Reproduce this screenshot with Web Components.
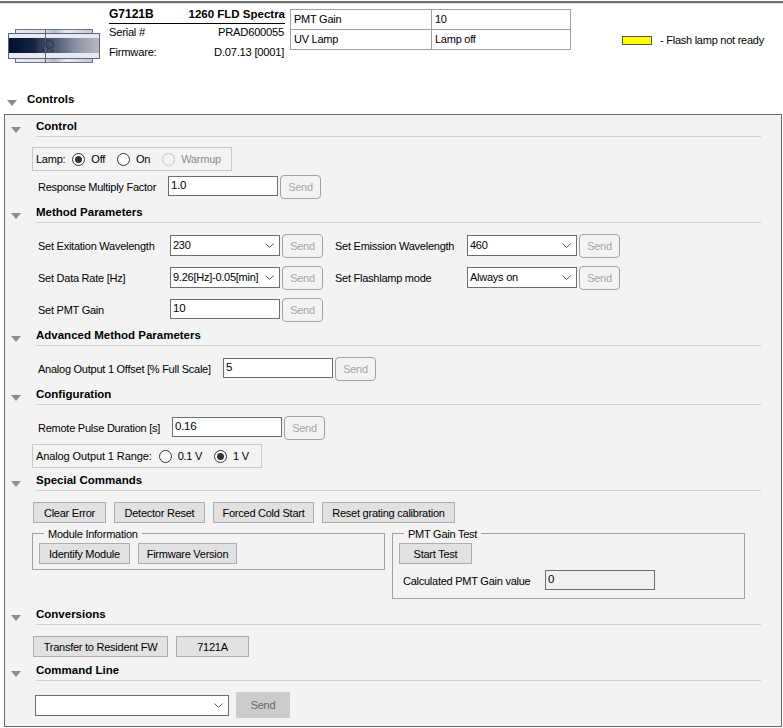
<!DOCTYPE html>
<html><head><meta charset="utf-8"><style>
html,body{margin:0;padding:0;background:#fff;}
body{font:11px "Liberation Sans",Arial,sans-serif;letter-spacing:-.25px;color:#000;width:783px;height:728px;overflow:hidden;}
</style></head><body>
<x-app></x-app>
<script>
function def(name, css, html){
  customElements.define(name, class extends HTMLElement{
    connectedCallback(){
      if(this.shadowRoot) return;
      const a=(k,d='')=>this.hasAttribute(k)?this.getAttribute(k):d;
      const r=this.attachShadow({mode:'open'});
      r.innerHTML='<style>'+css+'</style>'+(typeof html==='function'?html(a):html);
    }
  });
}
const CHEV='<svg width="9" height="5" viewBox="0 0 9 5"><path d="M.5 .5l4 4 4-4" fill="none" stroke="#555" stroke-width="1"/></svg>';

def('x-send',`:host{display:block;width:41px;height:24px;box-sizing:border-box;border:1px solid #a2a2a2;border-radius:4px;color:#a6a6a6;text-align:center;line-height:22px;flex:none}`,'Send');

def('x-input',`:host{display:block;width:110px;box-sizing:border-box;height:20px;border:1px solid #6e6e6e;background:#fff;padding:0 2px;line-height:16px;flex:none;margin-top:1px;font-size:11.5px}
:host([off]){background:#f0f0f0}`,a=>a('value'));

def('x-select',`:host{display:flex;align-items:center;width:110px;box-sizing:border-box;height:21px;border:1px solid #6e6e6e;background:#fff;padding:0 5px 0 2px;flex:none;margin-top:1px;white-space:nowrap}
span{flex:1;overflow:hidden;line-height:17px;margin-top:-1px;min-height:17px}svg{flex:none;margin-left:2px}`,a=>`<span>${a('value')}</span>${CHEV}`);

def('x-param',`:host{display:flex;align-items:flex-start;height:24px}
.l{flex:none;line-height:24px;white-space:nowrap}x-send{margin-left:2px}`,
a=>`<div class="l" style="width:${a('lw','132')}px">${a('label')}</div>`+
(a('kind')==='select'?`<x-select value="${a('value')}"></x-select>`:`<x-input value="${a('value')}"></x-input>`)+`<x-send></x-send>`);

def('x-radio',`:host{display:inline-flex;align-items:center;gap:6px;white-space:nowrap}
:host([dis]){color:#8c8c8c}
i{display:block;width:13px;height:13px;box-sizing:border-box;border:1px solid #333;border-radius:50%;background:#fff;position:relative;flex:none}
:host([dis]) i{border-color:#c4c4c4;background:#f3f3f3}
:host([on]) i::after{content:"";display:block;width:7px;height:7px;border-radius:50%;background:#333;margin:2px}`,
a=>`<i></i><slot></slot>`);

def('x-radiobox',`:host{display:flex;align-items:center;box-sizing:border-box;height:24px;border:1px solid #c9c9c9;padding:0 0 0 3px;gap:12px;white-space:nowrap}
::slotted(span){margin-right:-5px}`,`<slot></slot>`);

def('x-btn',`:host{display:block;box-sizing:border-box;height:21px;background:#e1e1e1;border:1px solid #adadad;text-align:center;line-height:20px;flex:none;white-space:nowrap}`,`<slot></slot>`);

def('x-group',`:host{display:block;box-sizing:border-box;width:353px;border:1px solid #a0a0a0;padding:9px 6px 0;position:relative;flex:none}
.t{position:absolute;left:11px;top:-7px;background:#f3f3f3;padding:0 4px;line-height:15px;white-space:nowrap}`,
a=>`<div class="t">${a('label')}</div><slot></slot>`);

def('x-section',`:host{display:block}
.h{position:relative;box-sizing:border-box;height:20px;margin-left:31px;border-bottom:1px solid #d2d2d2;font:bold 11.5px "Liberation Sans",Arial,sans-serif;letter-spacing:0;line-height:19px;white-space:nowrap}
svg{position:absolute;left:-25px;top:10px}
.b{padding-left:27px}`,
a=>`<div class="h"><svg width="10" height="6" viewBox="0 0 10 6"><path d="M0 0h10L5 6z" fill="#8f8f8f"/></svg>${a('label')}</div><div class="b"><slot></slot></div>`);

def('x-device',`:host{display:block;width:92px;height:34px;flex:none}svg{display:block}`,
`<svg width="92" height="34" viewBox="0 0 92 34">
<defs><linearGradient id="d" x1="0" x2="1" y1="0" y2="0">
<stop offset="0" stop-color="#00112f"/><stop offset=".28" stop-color="#14243f"/><stop offset=".34" stop-color="#2c3a56"/><stop offset=".5" stop-color="#4a5670"/><stop offset=".75" stop-color="#8d93a3"/><stop offset="1" stop-color="#b6b9c2"/></linearGradient>
<linearGradient id="t" x1="0" x2="1" y1="0" y2="0"><stop offset="0" stop-color="#e6e8f2"/><stop offset=".38" stop-color="#dcdce8"/><stop offset=".5" stop-color="#b4b8c4"/><stop offset=".66" stop-color="#e8e8f4"/><stop offset="1" stop-color="#c4c8d4"/></linearGradient></defs>
<rect x="7.500" y=".5" width="77" height="33" fill="url(#t)" stroke="#6c7488"/>
<rect x=".5" y="4.500" width="91" height="25" fill="#e8e9f5" stroke="#5c6478"/>
<rect x="1" y="9" width="90" height="15" fill="url(#d)"/>
<path d="M37.500 0v34M7 4.500h78M7 29.500h78" stroke="#5c6478" fill="none"/>
<circle cx="41.500" cy="15.500" r="4" fill="none" stroke="#2a3040"/>
<circle cx="44.500" cy="21.500" r="1" fill="#2a3040"/><circle cx="35" cy="21" r="1" fill="#1a2030"/>
</svg>`);

def('x-info',`:host{display:block;width:176px;flex:none}
.r{display:flex;justify-content:space-between;padding-right:1px}
.top{font-weight:bold;height:19px;line-height:20px;border-bottom:1px solid #000;padding-right:0;letter-spacing:0}
.top span:first-child{font-size:12px}.top span:last-child{font-size:11.5px}
.s{height:20px;line-height:16px;font-size:11.2px}`,
`<div class="r top"><span>G7121B</span><span>1260 FLD Spectra</span></div>
<div class="r s"><span>Serial #</span><span>PRAD600055</span></div>
<div class="r s"><span>Firmware:</span><span>D.07.13 [0001]</span></div>`);

def('x-status',`:host{display:grid;grid-template-columns:141px 138px;width:281px;box-sizing:border-box;border:1px solid #a0a0a0;flex:none;height:41px}
div{box-sizing:border-box;height:20px;line-height:19px;padding-left:3px;white-space:nowrap}
.c1{border-right:1px solid #a0a0a0}.r1{border-bottom:1px solid #a0a0a0}`,
`<div class="c1 r1">PMT Gain</div><div class="r1">10</div><div class="c1">UV Lamp</div><div>Lamp off</div>`);

def('x-legend',`:host{display:flex;align-items:center;gap:8px;white-space:nowrap}
i{display:block;width:30px;height:9px;box-sizing:border-box;background:#ff0;border:1px solid #555}`,
`<i></i><span>- Flash lamp not ready</span>`);

def('x-header',`:host{display:flex;align-items:flex-start;height:85px;padding-left:8px;box-sizing:border-box}
x-device{margin-top:25px}x-info{margin-left:9px}x-status{margin-left:5px;margin-top:5px}x-legend{margin-left:51px;margin-top:30px}`,
`<x-device></x-device><x-info></x-info><x-status></x-status><x-legend></x-legend>`);

def('x-top',`:host{display:block;height:4px;box-sizing:border-box;border-top:1px solid #fff;background:linear-gradient(#6e6e6e 0,#6e6e6e 2px,#dedede 2px)}`,``);

def('x-controls-title',`:host{display:block;position:relative;height:25px;padding-left:27px;font-weight:bold;font-size:11.5px;letter-spacing:0;line-height:20px}
svg{position:absolute;left:7px;top:11px}`,
`<svg width="10" height="6" viewBox="0 0 10 6"><path d="M0 0h10L5 6z" fill="#8c8c8c"/></svg>Controls`);

def('x-panel',`:host{display:block;box-sizing:border-box;margin-left:4px;width:778px;height:613px;border:1px solid #6a6a6a;background:#f3f3f3;padding-top:2px}
::slotted(x-section){margin-right:20px}`,`<slot></slot>`);

def('x-app',`:host{display:block}`,
`<x-top></x-top><x-header></x-header><x-controls-title></x-controls-title>
<x-panel>
 <x-section label="Control" style="height:86px">
  <div style="padding-top:10px">
   <x-radiobox style="width:200px"><span>Lamp:</span><x-radio on>Off</x-radio><x-radio>On</x-radio><x-radio dis>Warmup</x-radio></x-radiobox>
   <x-param style="margin:4px 0 0 6px" lw="130" label="Response Multiply Factor" value="1.0"></x-param>
  </div>
 </x-section>
 <x-section label="Method Parameters" style="height:123px">
  <div style="padding:11px 0 0 6px;display:grid;grid-template-columns:285px 285px;column-gap:12px;row-gap:8px;justify-content:start">
   <x-param kind="select" label="Set Exitation Wavelength" value="230"></x-param>
   <x-param kind="select" label="Set Emission Wavelength" value="460"></x-param>
   <x-param kind="select" label="Set Data Rate [Hz]" value="9.26[Hz]-0.05[min]"></x-param>
   <x-param kind="select" label="Set Flashlamp mode" value="Always on"></x-param>
   <x-param label="Set PMT Gain" value="10"></x-param>
  </div>
 </x-section>
 <x-section label="Advanced Method Parameters" style="height:59px">
  <div style="padding:11px 0 0 6px"><x-param lw="185" label="Analog Output 1 Offset [% Full Scale]" value="5"></x-param></div>
 </x-section>
 <x-section label="Configuration" style="height:86px">
  <div style="padding:11px 0 0 0">
   <x-param style="margin-left:6px" lw="134" label="Remote Pulse Duration [s]" value="0.16"></x-param>
   <x-radiobox style="width:230px;margin-top:4px"><span style="letter-spacing:-.11px">Analog Output 1 Range:</span><x-radio>0.1 V</x-radio><x-radio on>1 V</x-radio></x-radiobox>
  </div>
 </x-section>
 <x-section label="Special Commands" style="height:134px">
  <div style="padding:11px 0 0 1px;display:flex;gap:8px">
   <x-btn style="width:73px">Clear Error</x-btn><x-btn style="width:91px">Detector Reset</x-btn><x-btn style="width:101px">Forced Cold Start</x-btn><x-btn style="width:133px">Reset grating calibration</x-btn>
  </div>
  <div style="display:flex;gap:7px;align-items:flex-start;margin-top:10px">
   <x-group label="Module Information" style="height:37px"><div style="display:flex;gap:8px"><x-btn style="width:91px">Identify Module</x-btn><x-btn style="width:99px">Firmware Version</x-btn></div></x-group>
   <x-group label="PMT Gain Test" style="height:66px"><x-btn style="width:73px">Start Test</x-btn>
    <div style="display:flex;align-items:center;margin:6px 0 0 4px"><span style="width:142px;white-space:nowrap;padding-top:2px">Calculated PMT Gain value</span><x-input off value="0" style="margin:0"></x-input></div></x-group>
  </div>
 </x-section>
 <x-section label="Conversions" style="height:56px">
  <div style="padding:11px 0 0 1px;display:flex;gap:8px"><x-btn style="width:135px">Transfer to Resident FW</x-btn><x-btn style="width:73px">7121A</x-btn></div>
 </x-section>
 <x-section label="Command Line" style="height:62px">
  <div style="padding:11px 0 0 3px;display:flex;gap:7px;align-items:flex-start">
   <x-select style="width:194px;margin-top:3px" value=""></x-select>
   <div style="width:54px;height:26px;background:#ccc;color:#666;text-align:center;line-height:26px">Send</div>
  </div>
 </x-section>
</x-panel>`);
</script></body></html>
